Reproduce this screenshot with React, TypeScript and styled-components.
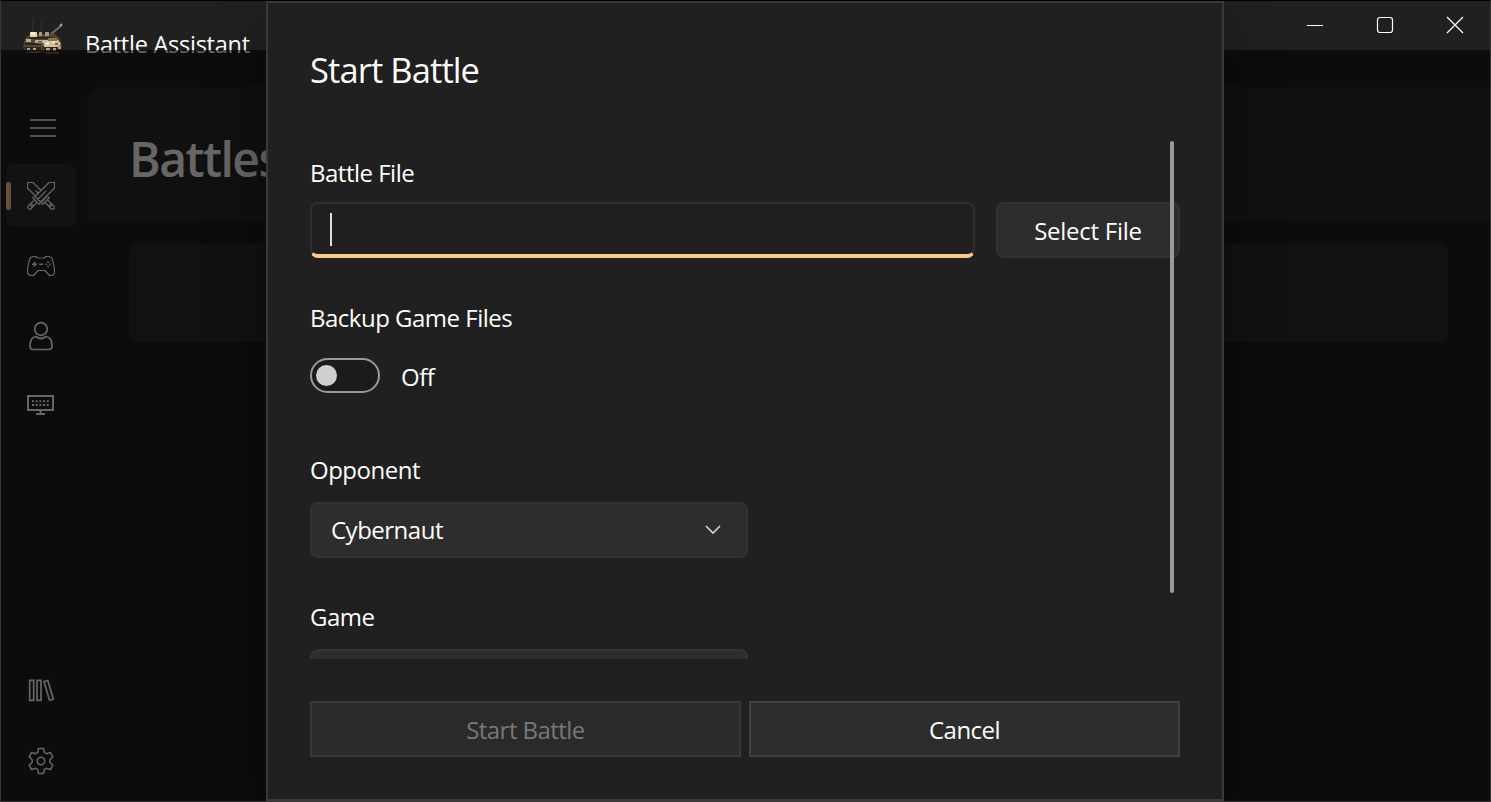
import React from "react";
import styled, { createGlobalStyle } from "styled-components";

const GlobalStyle = createGlobalStyle`
  * { box-sizing: border-box; }
  body { margin: 0; background: #202020; overflow: hidden; }
  button { font: inherit; letter-spacing: inherit; }
`;

const Window = styled.div`
  position: relative;
  display: flex;
  flex-direction: column;
  width: 1491px;
  height: 802px;
  overflow: hidden;
  background: #202020;
  border: 1px solid #363636;
  border-top-color: #000;
  border-bottom-color: #3a3033;
  color: #fff;
  font-family: "Open Sans", "Noto Sans", sans-serif;
  font-size: 24px;
`;

const TitleBar = styled.header`
  display: flex;
  height: 86px;
  padding-left: 20px;
  flex: none;
`;

const AppIcon = styled.svg`
  width: 44px;
  height: 40px;
  margin-top: 14px;
`;

const AppName = styled.span`
  margin: 26px 0 0 20px;
  line-height: 34px;
  font-size: 23.5px;
  letter-spacing: -0.25px;
  white-space: nowrap;
`;

const WindowControls = styled.div`
  display: flex;
  margin-left: auto;
  height: 48px;
`;

const ControlButton = styled.button`
  display: grid;
  place-items: center;
  width: 70px;
  height: 48px;
  padding: 0;
  border: 0;
  background: none;
  color: #fff;
`;

const Body = styled.div`
  display: flex;
  flex: 1;
  min-height: 0;
`;

const NavRail = styled.nav`
  display: flex;
  flex-direction: column;
  width: 86px;
  padding: 8px 0 9px 5px;
  gap: 7px;
`;

const NavItem = styled.div<{ $active?: boolean; $bottom?: boolean }>`
  display: flex;
  align-items: center;
  justify-content: center;
  width: 70px;
  height: 63px;
  flex: none;
  margin-top: ${(p) => (p.$bottom ? "auto" : 0)};
  border-radius: 8px;
  background: ${(p) => (p.$active ? "#2d2d2d" : "transparent")};
  color: #fff;
  &::before {
    content: "";
    width: 5px;
    height: 28px;
    margin-right: 16px;
    margin-left: -21px;
    border-radius: 3px;
    background: ${(p) => (p.$active ? "#ffc88b" : "transparent")};
  }
`;

const MenuButton = styled(NavItem)`
  height: 62px;
  padding: 3px 0 0 4px;
`;

const Content = styled.main`
  flex: 1;
  border-top-left-radius: 16px;
  overflow: hidden;
`;

const PageHeader = styled.div`
  height: 135px;
  padding: 39px 0 0 42px;
  background: #282828;
`;

const PageTitle = styled.h1`
  margin: 0;
  font-size: 48px;
  font-weight: 600;
  line-height: 66px;
  letter-spacing: -1.5px;
`;

const BattleCard = styled.div`
  height: 98px;
  margin: 22px 42px 0;
  border-radius: 8px;
  background: #2b2b2b;
  border: 1px solid #2f2f2f;
`;

const Scrim = styled.div`
  position: absolute;
  inset: 49px 0 0;
  background: rgba(0, 0, 0, 0.6);
`;

const Dialog = styled.section`
  position: absolute;
  top: 0;
  left: 265px;
  display: flex;
  flex-direction: column;
  width: 958px;
  height: 800px;
  padding: 43px 42px 42px;
  background: #202020;
  border: 2px solid #3a3a3a;
  box-shadow: 0 28px 56px rgba(0, 0, 0, 0.3);
`;

const DialogTitle = styled.h2`
  margin: 0;
  font-size: 34.5px;
  font-weight: 400;
  line-height: 48px;
  letter-spacing: -0.9px;
`;

const FormViewport = styled.div`
  position: relative;
  height: 518px;
  margin-top: 47px;
  overflow: hidden;
  flex: none;
`;

const Field = styled.div<{ $space: number }>`
  display: flex;
  flex-direction: column;
  align-items: flex-start;
  margin-top: ${(p) => p.$space}px;
`;

const Label = styled.label`
  height: 34px;
  line-height: 34px;
  font-size: 24px;
  letter-spacing: -0.5px;
  white-space: nowrap;
`;

const FileRow = styled.div`
  display: flex;
  gap: 21px;
  width: 100%;
  margin-top: 12px;
`;

const FileInput = styled.div`
  display: flex;
  align-items: flex-start;
  width: 665px;
  height: 56px;
  padding: 9px 18px;
  border: 2px solid #2e2e2e;
  border-bottom: 4px solid #ffc88b;
  border-radius: 8px;
  background: #1f1f1f;
`;

const Caret = styled.span`
  width: 2px;
  height: 33px;
  background: #ddd;
`;

const SelectFile = styled.button`
  width: 184px;
  height: 56px;
  padding: 1px 0 0;
  border: 2px solid #333;
  border-radius: 8px;
  background: #2d2d2d;
  color: #fff;
  font-size: 24px;
  letter-spacing: -0.25px;
`;

const ToggleRow = styled.div`
  display: flex;
  align-items: center;
  gap: 21px;
  height: 36px;
  margin-top: 22px;
`;

const ToggleState = styled(Label)`
  padding-top: 2px;
`;

const Toggle = styled.span`
  display: flex;
  align-items: center;
  width: 70px;
  height: 35px;
  padding-left: 4px;
  border: 2px solid #9a9a9a;
  border-radius: 18px;
  background: #1b1b1b;
  &::before {
    content: "";
    width: 21px;
    height: 21px;
    border-radius: 50%;
    background: #cfcfcf;
  }
`;

const ComboBox = styled.div`
  display: flex;
  align-items: center;
  justify-content: space-between;
  width: 438px;
  height: 56px;
  margin-top: 15px;
  padding: 0 24px 0 19px;
  border: 2px solid #333;
  border-radius: 8px;
  background: #2d2d2d;
`;

const Chevron = styled.svg`
  width: 18px;
  height: 12px;
  color: #d4d4d4;
`;

const ScrollThumb = styled.span`
  position: absolute;
  top: 0;
  right: 6px;
  width: 4px;
  height: 452px;
  border-radius: 2px;
  background: #9a9a9a;
`;

const Actions = styled.footer`
  display: flex;
  gap: 8px;
  margin-top: auto;
`;

const ActionButton = styled.button`
  flex: 1;
  height: 56px;
  padding: 1px 0 0;
  border: 2px solid #404040;
  background: #2d2d2d;
  color: #fff;
  font-size: 24px;
  letter-spacing: -0.55px;
  &:disabled {
    color: #787878;
    background: #2a2a2a;
    border-color: #383838;
  }
`;

const TankIcon = () => (
  <AppIcon viewBox="0 0 44 40">
    <path d="M12 3v14M20 7v9" stroke="#28302d" strokeWidth="1.5" />
    <path d="M29 20L41 10" stroke="#786b57" strokeWidth="2" />
    <path d="M39 11l2-2" stroke="#aaa18c" strokeWidth="2" />
    <path d="M4 24l5-5h25l5 5 2 8-4 6H6l-4-6z" fill="#514634" />
    <path d="M9 17h7v7H9z" fill="#dfd2b2" />
    <path d="M10 17h4v3h-4z" fill="#f5ecd0" />
    <path d="M18 17h3v4h-3zM24 17h4v4h-4z" fill="#a7997b" />
    <path d="M5 24h5v3H5zM14 25h9v3h-9z" fill="#b8aa88" />
    <path d="M4 28h16v2H4zM8 22h24v2H8z" fill="#2b251f" />
    <path d="M22 25h15l3 4-3 3H23z" fill="#d1c29d" />
    <path d="M27 23h9v3h-9z" fill="#877451" />
    <path d="M25 27h3v3h-3zM31 26h3v2h-3z" fill="#f1e3bf" />
    <path d="M17 26h4v3h-4zM34 28h3v2h-3z" fill="#866052" />
    <path d="M3 32h17v4H5zM22 32h19l-3 6H24z" fill="#2d271f" />
    <path d="M6 33h3v2H6zM12 33h3v2h-3zM25 33h4v3h-4zM32 33h3v3h-3zM37 31h3v3h-3z" fill="#b0a07d" />
    <path d="M8 37h11M25 38h13" stroke="#82765e" strokeWidth="1.5" />
  </AppIcon>
);

const line = { fill: "none", stroke: "currentColor" };

const MenuIcon = () => (
  <svg width="28" height="20" viewBox="0 0 28 20" {...line} strokeWidth="1.6">
    <path d="M1 2h26M1 10h26M1 18h26" />
  </svg>
);

const SwordsIcon = () => (
  <svg width="28" height="28" viewBox="0 0 28 28" {...line} strokeWidth="1.15" strokeLinejoin="round">
    <path d="M22 .5h5.500V6L13.500 20 8 14.500zM19 9l-8.500 8.500" />
    <path d="M14 8.500L6 .5H.5V6L8 13.500M8.500 8.500l3 3M20 14.500L14.500 20" />
    <path d="M5.500 15.500l7 7M5.500 15.500l2-1M12.500 22.500l1-2M7.500 18l-5.500 5M10 20.500L4.500 26" />
    <path d="M22.500 15.500l-7 7M22.500 15.500l-2-1M15.500 22.500l-1-2M20.500 18l5.500 5M18 20.500l5.500 5.500" />
    <circle cx="2.700" cy="25.200" r="2" />
    <circle cx="25.300" cy="25.200" r="2" />
    <path d="M4 21.500l2.500 2.500M24 21.500L21.500 24" />
  </svg>
);

const GamepadIcon = () => (
  <svg width="28" height="20" viewBox="0 0 28 20" {...line} strokeWidth="1.2" strokeLinejoin="round">
    <path d="M3.500 1.500l3-1h2.500l1.500 1.500h7L19 .5h2.500l3 1 1.500 4 1.500 7.500v4l-2 2.500h-3l-4.500-5h-7l-4.500 5H3l-2.500-2.500v-4L2 5.500z" />
    <path d="M5 8.200h5M7.500 5.700v5M12 8.200h4" strokeWidth="1.500" />
    <path d="M18.300 8.200h1.500M22.200 8.200h1.500M21 5.300V7M21 9.400v1.800" strokeWidth="1.500" />
  </svg>
);

const PersonIcon = () => (
  <svg width="26" height="30" viewBox="0 -0.5 26 30" {...line} strokeWidth="1.7">
    <circle cx="13" cy="7.5" r="6.3" />
    <path d="M8 15c-4 .5-6 4-6 9.5 0 2.2 1 3.5 3 3.5h16c2 0 3-1.3 3-3.5 0-5.500-2-9-6-9.500-3 2.400-7 2.400-10 0z" />
  </svg>
);

const MonitorIcon = () => (
  <svg width="29" height="23" viewBox="0 0 29 23" {...line} strokeWidth="2">
    <path d="M1 2h25v14H1zM13.500 16v3M9 20h9" />
    <path d="M5 7.300h17M5 10.900h17" strokeWidth="2" strokeDasharray="2 1.700" />
  </svg>
);

const LibraryIcon = () => (
  <svg width="27" height="23" viewBox="0 0 27 23" {...line} strokeWidth="1.700">
    <path d="M1.700 1.300h4v20h-4zM9 1.300h4v20H9zM16 2.500l3.800-1 5.500 18.700-3.800 1z" />
  </svg>
);

const GearIcon = () => (
  <svg width="26" height="28" viewBox="0 0 26 28" {...line} strokeWidth="1.5" strokeLinejoin="round">
    <path d="M10.500 1.500h5l.9 4.100 2 1.100 4-1.200 2.500 4.300-3.100 2.900v2.600l3.100 2.900-2.500 4.300-4-1.200-2 1.100-.9 4.100h-5l-.9-4.100-2-1.100-4 1.200L1.100 18.200l3.100-2.900v-2.600L1.100 9.800l2.500-4.300 4 1.200 2-1.100z" />
    <circle cx="13" cy="14" r="3.700" />
  </svg>
);

export default function App() {
  return (
    <>
      <GlobalStyle />
      <Window>
        <TitleBar>
          <TankIcon />
          <AppName>Battle Assistant</AppName>
          <WindowControls>
            <ControlButton aria-label="Minimize">
              <svg width="18" height="18" {...line}><path d="M1 9.500h16" /></svg>
            </ControlButton>
            <ControlButton aria-label="Maximize">
              <svg width="18" height="18" {...line} strokeWidth="1.200"><rect x="1.500" y="1.500" width="15" height="15" rx="2.500" /></svg>
            </ControlButton>
            <ControlButton aria-label="Close">
              <svg width="18" height="18" {...line} strokeWidth="1.200"><path d="M1 1l16 16M17 1L1 17" /></svg>
            </ControlButton>
          </WindowControls>
        </TitleBar>
        <Body>
          <NavRail>
            <MenuButton><MenuIcon /></MenuButton>
            <NavItem $active><SwordsIcon /></NavItem>
            <NavItem><GamepadIcon /></NavItem>
            <NavItem><PersonIcon /></NavItem>
            <NavItem><MonitorIcon /></NavItem>
            <NavItem $bottom><LibraryIcon /></NavItem>
            <NavItem><GearIcon /></NavItem>
          </NavRail>
          <Content>
            <PageHeader><PageTitle>Battles</PageTitle></PageHeader>
            <BattleCard />
          </Content>
        </Body>
        <Scrim />
        <Dialog>
          <DialogTitle>Start Battle</DialogTitle>
          <FormViewport>
            <Field $space={15}>
              <Label>Battle File</Label>
              <FileRow>
                <FileInput><Caret /></FileInput>
                <SelectFile>Select File</SelectFile>
              </FileRow>
            </Field>
            <Field $space={43}>
              <Label>Backup Game Files</Label>
              <ToggleRow>
                <Toggle />
                <ToggleState>Off</ToggleState>
              </ToggleRow>
            </Field>
            <Field $space={60}>
              <Label>Opponent</Label>
              <ComboBox>
                <Label>Cybernaut</Label>
                <Chevron viewBox="0 0 18 12" {...line} strokeWidth="1.600"><path d="M2 2l7 7 7-7" /></Chevron>
              </ComboBox>
            </Field>
            <Field $space={42}>
              <Label>Game</Label>
              <ComboBox />
            </Field>
            <ScrollThumb />
          </FormViewport>
          <Actions>
            <ActionButton disabled>Start Battle</ActionButton>
            <ActionButton>Cancel</ActionButton>
          </Actions>
        </Dialog>
      </Window>
    </>
  );
}
